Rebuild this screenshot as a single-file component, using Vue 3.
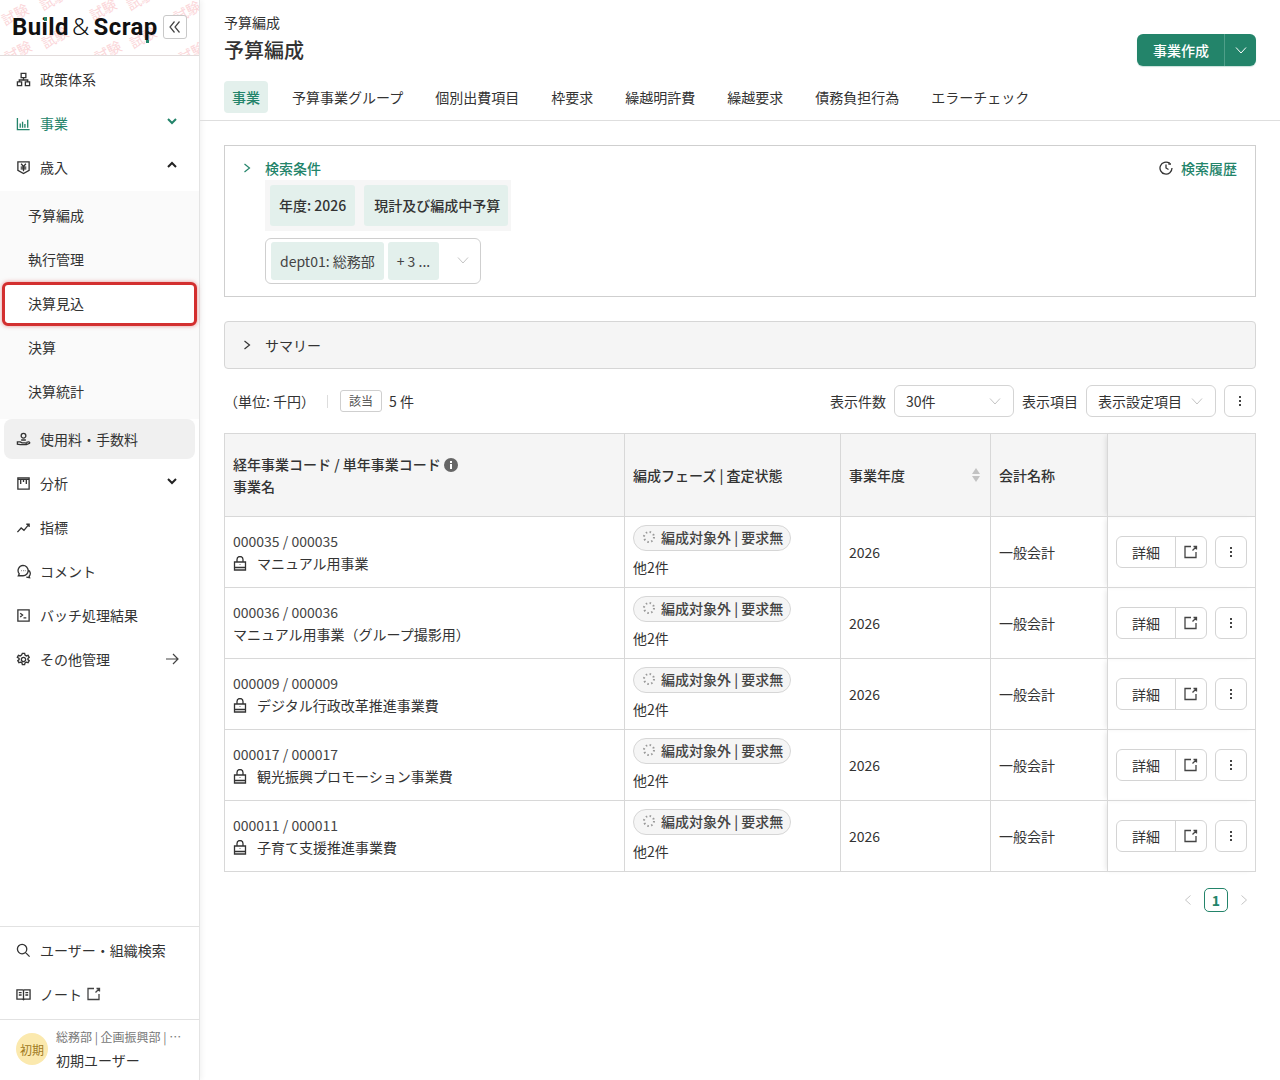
<script setup>
const topNav = [
  { label: '政策体系', icon: 'M5.500 1.500h5v4.500h-5zM8 6v2.500M3.500 10.500v-2h9v2M1.500 10.500h4.500v4h-4.500zM10 10.500h4.500v4H10z' },
  { label: '事業', green: true, chevron: 'down', icon: 'M1.500 2v12.500h13M4.500 12.500V8M7 12.500V6M9.500 12.500V8.500M12.500 12.500V4' },
  { label: '歳入', chevron: 'up', icon: 'M2 2h12v9l-6 3.500L2 11zM5.500 4l2.500 3 2.500-3M5 7.500h6M5 9.500h6M8 7v5' }
]
const subNav = ['予算編成', '執行管理', '決算見込', '決算', '決算統計']
const lowerNav = [
  { label: '使用料・手数料', active: true, icon: 'M8 1.500a2.500 2.500 0 1 1 0 5 2.500 2.500 0 0 1 0-5zM5.500 8.500h5M1.500 10.500h3l2 1h3.500a1 1 0 0 1 0 2H4.500l-3-.500zM11 11l2.500-.500a1 1 0 0 1 1 1.500L11 13.500' },
  { label: '分析', chevron: 'down', icon: 'M2 2h12v12H2zM2 3.500h12M5 3.500v5M8 3.500v3M11 3.500v5' },
  { label: '指標', icon: 'M1.500 13l4-4.500 3 2.500 5-6M11 4.500h3v3' },
  { label: 'コメント', icon: 'M7.500 1.500a5.500 5.500 0 0 1 5.500 5.500 5.500 5.500 0 0 1-5.500 5.500H2.500l1-2A5.500 5.500 0 0 1 7.500 1.500zM13 6.500a4 4 0 0 1 1 6.500l.500 1.500-3.500-.500M5.500 7h.500M7.500 7h.500M9.500 7h.500' },
  { label: 'バッチ処理結果', icon: 'M2 2h12v12H2zM4.500 5.500l2.500 2-2.500 2M8 10.500h3' },
  { label: 'その他管理', arrow: true, icon: 'M6.800 1.500h2.400l.400 1.800 1.500.900 1.800-.600 1.200 2.100-1.400 1.200v1.200l1.400 1.200-1.200 2.100-1.800-.600-1.500.900-.400 1.800H6.800l-.400-1.800-1.500-.900-1.800.600-1.200-2.100 1.400-1.200V6.900L1.400 5.700l1.200-2.100 1.800.600 1.500-.900zM8 5.700a2.300 2.300 0 1 1 0 4.600 2.300 2.300 0 0 1 0-4.600z' }
]
const tabs = ['事業', '予算事業グループ', '個別出費項目', '枠要求', '繰越明許費', '繰越要求', '債務負担行為', 'エラーチェック']
const rows = [
  { code: '000035 / 000035', name: 'マニュアル用事業', locked: true },
  { code: '000036 / 000036', name: 'マニュアル用事業（グループ撮影用）', locked: false },
  { code: '000009 / 000009', name: 'デジタル行政改革推進事業費', locked: true },
  { code: '000017 / 000017', name: '観光振興プロモーション事業費', locked: true },
  { code: '000011 / 000011', name: '子育て支援推進事業費', locked: true }
]
// 透かしの位置
const marks = [
  { left: 1, top: 5 }, { left: 39, top: -10 }, { left: 89, top: 0 }, { left: 126, top: -10 }, { left: 173, top: 2 },
  { left: 41, top: 28 }, { left: 129, top: 28 }, { left: 4, top: 42 }, { left: 94, top: 42 }, { left: 178, top: 43 }
]
</script>

<template>
  <div class="page">
    <aside class="sidebar">
      <div class="brand">
        <span v-for="(m, i) in marks" :key="i" class="mark" :style="{ left: m.left + 'px', top: m.top + 'px' }">試験</span>
        <div class="logo"><b>Bu<span class="dot-i">i</span>ld</b><span class="amp">&amp;</span><b>Scra<span class="dot-p">p</span></b></div>
        <button class="collapse">
          <svg width="14" height="14" viewBox="0 0 14 14"><path d="M6.500 1.500L2 7l4.500 5.500M11.500 1.500L7 7l4.500 5.500" /></svg>
        </button>
      </div>

      <nav class="nav">
        <div v-for="item in topNav" :key="item.label" class="nav-item" :class="{ green: item.green }">
          <svg class="nav-icon" width="15" height="15" viewBox="0 0 16 16"><path :d="item.icon" /></svg>
          <span class="nav-label">{{ item.label }}</span>
          <svg v-if="item.chevron" class="chev" width="12" height="12" viewBox="0 0 12 12"><path :d="item.chevron === 'down' ? 'M2 4l4 4 4-4' : 'M2 8l4-4 4 4'" /></svg>
        </div>
        <div class="sub-nav">
          <div v-for="s in subNav" :key="s" class="sub-item" :class="{ marked: s === '決算見込' }">{{ s }}</div>
        </div>
        <div v-for="item in lowerNav" :key="item.label" class="nav-item" :class="{ active: item.active }">
          <svg class="nav-icon" width="15" height="15" viewBox="0 0 16 16"><path :d="item.icon" /></svg>
          <span class="nav-label">{{ item.label }}</span>
          <svg v-if="item.chevron" class="chev" width="12" height="12" viewBox="0 0 12 12"><path d="M2 4l4 4 4-4" /></svg>
          <svg v-if="item.arrow" class="arrow" width="14" height="14" viewBox="0 0 14 14"><path d="M1 7h12M8 2l5 5-5 5" /></svg>
        </div>
      </nav>

      <div class="side-bottom">
        <div class="nav-item">
          <svg class="nav-icon" width="15" height="15" viewBox="0 0 16 16"><path d="M6.500 1.500a5 5 0 1 1 0 10 5 5 0 0 1 0-10zM10 10l4.500 4.500" /></svg>
          <span class="nav-label">ユーザー・組織検索</span>
        </div>
        <div class="nav-item">
          <svg class="nav-icon" width="15" height="15" viewBox="0 0 16 16"><path d="M1 3h6a1 1 0 0 1 1 1 1 1 0 0 1 1-1h6v10H9l-1 .500L7 13H1zM8 4v9.500M3 6h3M3 8.500h3M10 6h3M10 8.500h3" /></svg>
          <span class="nav-label">ノート</span>
          <svg class="ext note-ext" width="14" height="14" viewBox="0 0 14 14"><path d="M7 1.500H1v11h11V7M8.500 5.500L12.500 1.500M9.500 1.500h3v3" /></svg>
        </div>
      </div>
      <div class="user">
        <div class="avatar">初期</div>
        <div class="user-text">
          <div class="org">総務部 | 企画振興部 | ⋯</div>
          <div class="uname">初期ユーザー</div>
        </div>
      </div>
    </aside>

    <main class="main">
      <header class="header">
        <div class="head-top">
          <div class="head-text">
            <div class="crumb">予算編成</div>
            <h1 class="title">予算編成</h1>
          </div>
          <div class="split-btn">
            <span class="split-main">事業作成</span>
            <span class="split-drop">
              <svg width="12" height="12" viewBox="0 0 12 12"><path d="M1 3.500l5 5.500 5-5.500" /></svg>
            </span>
          </div>
        </div>
        <div class="tabs">
          <span v-for="(t, i) in tabs" :key="t" class="tab" :class="{ current: i === 0 }">{{ t }}</span>
        </div>
      </header>

      <div class="content">
        <section class="search">
          <div class="search-head">
            <svg class="card-chev" width="10" height="10" viewBox="0 0 10 10"><path d="M2.500 1l5 4-5 4" /></svg>
            <span class="search-title">検索条件</span>
            <span class="history">
              <svg width="14" height="14" viewBox="0 0 14 14"><path d="M10.500 2.200a6 6 0 1 0 2.500 4.800M7 3.500V7l2.500 1.500M10 1v2h2" /></svg>
              <span>検索履歴</span>
            </span>
          </div>
          <div class="search-body">
            <div class="chip-band">
              <span class="chip big">年度: 2026</span>
              <span class="chip big wide">現計及び編成中予算</span>
            </div>
            <div class="multi">
              <span class="chip">dept01: 総務部</span>
              <span class="chip">+ 3 ...</span>
              <svg class="select-chev" width="12" height="12" viewBox="0 0 12 12"><path d="M1 3.500l5 5.500 5-5.500" /></svg>
            </div>
          </div>
        </section>

        <section class="summary">
          <svg class="summary-chev" width="10" height="10" viewBox="0 0 10 10"><path d="M2.500 1l5 4-5 4" /></svg>
          <span>サマリー</span>
        </section>

        <div class="toolbar">
          <span class="unit">（単位: 千円）</span>
          <span class="sep"></span>
          <span class="badge">該当</span>
          <span class="count">5 件</span>
          <span class="spacer"></span>
          <span>表示件数</span>
          <span class="select w120">30件<svg width="12" height="12" viewBox="0 0 12 12"><path d="M1 3.500l5 5.500 5-5.500" /></svg></span>
          <span>表示項目</span>
          <span class="select w130">表示設定項目<svg width="12" height="12" viewBox="0 0 12 12"><path d="M1 3.500l5 5.500 5-5.500" /></svg></span>
          <button class="kebab"><i></i><i></i><i></i></button>
        </div>

        <table class="grid">
          <colgroup>
            <col style="width: 400px" /><col style="width: 216px" /><col style="width: 150px" /><col style="width: 117px" /><col />
          </colgroup>
          <thead>
            <tr>
              <th class="code-head">
                <div>経年事業コード / 単年事業コード
                  <svg class="info" width="14" height="14" viewBox="0 0 14 14"><circle cx="7" cy="7" r="7" /><rect x="6" y="6" width="2" height="5" /><rect x="6" y="3" width="2" height="2" /></svg>
                </div>
                <div class="second">事業名</div>
              </th>
              <th>編成フェーズ | 査定状態</th>
              <th>
                <div class="sortable">事業年度
                  <svg width="10" height="14" viewBox="0 0 10 14"><path d="M5 0l4 6H1zM5 14L1 8h8z" /></svg>
                </div>
              </th>
              <th>会計名称</th>
              <th class="fixed"></th>
            </tr>
          </thead>
          <tbody>
            <tr v-for="r in rows" :key="r.code">
              <td>
                <div class="code">{{ r.code }}</div>
                <div class="name">
                  <svg v-if="r.locked" class="lock" width="14" height="15" viewBox="0 0 14 15"><path d="M4 6V3.500a3 3 0 0 1 6 0V6M1.500 6h11v8h-11zM1.500 11.500h11M7 8.500v.500" /></svg>
                  <span>{{ r.name }}</span>
                </div>
              </td>
              <td class="phase">
                <span class="status">
                  <svg width="14" height="14" viewBox="0 0 14 14"><circle cx="7" cy="7" r="5" /></svg>
                  編成対象外 | 要求無
                </span>
                <div class="more">他2件</div>
              </td>
              <td>2026</td>
              <td>一般会計</td>
              <td class="fixed">
                <div class="actions">
                  <span class="detail">
                    <span class="detail-main">詳細</span>
                    <span class="detail-ext">
                      <svg class="ext" width="14" height="14" viewBox="0 0 14 14"><path d="M7 1.500H1v11h11V7M8.500 5.500L12.500 1.500M9.500 1.500h3v3" /></svg>
                    </span>
                  </span>
                  <button class="kebab"><i></i><i></i><i></i></button>
                </div>
              </td>
            </tr>
          </tbody>
        </table>

        <div class="pager">
          <svg width="10" height="12" viewBox="0 0 10 12"><path d="M7.500 1.500L2.500 6l5 4.500" /></svg>
          <span class="page-no">1</span>
          <svg width="10" height="12" viewBox="0 0 10 12"><path d="M2.500 1.500L7.500 6l-5 4.500" /></svg>
        </div>
      </div>
    </main>
  </div>
</template>

<style>
html, body {
  margin: 0;
  background: #fff;
}
</style>

<style scoped>
.page {
  display: flex;
  width: 1280px;
  min-height: 1080px;
  font-family: "Noto Sans CJK JP", "Noto Sans", sans-serif;
  font-size: 14px;
  color: #333;
}

/* sidebar */
.sidebar {
  width: 199px;
  height: 1080px;
  flex: none;
  display: flex;
  flex-direction: column;
  border-right: 1px solid #e4e4e4;
  box-shadow: 2px 0 5px rgba(0, 0, 0, 0.05);
  background: #fff;
  box-sizing: content-box;
}
.brand {
  position: relative;
  height: 56px;
  flex: none;
  display: flex;
  align-items: center;
  justify-content: space-between;
  padding: 0 12px 2px;
  box-sizing: border-box;
  border-bottom: 1px solid #e2dcdc;
  overflow: hidden;
}
.mark {
  position: absolute;
  font-size: 14px;
  line-height: 19px;
  color: #fbd6d9;
  transform: rotate(-28deg);
  white-space: nowrap;
}
.logo {
  position: relative;
  font-family: Roboto, "Noto Sans", sans-serif;
  font-size: 24px;
  line-height: 32px;
  color: #111;
  letter-spacing: 0.4px;
  white-space: nowrap;
}
.logo b { font-weight: 700; }
.dot-i, .dot-p { position: relative; }
.dot-i::before {
  content: "";
  position: absolute;
  left: 2px;
  top: 4px;
  width: 3px;
  height: 4px;
  background: #23846a;
}
.dot-p::after {
  content: "";
  position: absolute;
  left: 2px;
  bottom: -2px;
  width: 3px;
  height: 3px;
  background: #23846a;
}
.amp {
  font-weight: 300;
  font-family: "Noto Sans", sans-serif;
  margin: 0 4px 0 3px;
}
.collapse {
  position: relative;
  width: 24px;
  height: 24px;
  flex: none;
  padding: 0;
  display: flex;
  align-items: center;
  justify-content: center;
  background: #fff;
  border: 1px solid #c9c9c9;
  border-radius: 3px;
}
.collapse path { fill: none; stroke: #444; stroke-width: 1.200; }
.nav { padding-top: 1px; flex: 1; }
.nav-item {
  position: relative;
  height: 44px;
  display: flex;
  align-items: center;
  padding: 0 16px;
  box-sizing: border-box;
}
.nav-icon { flex: none; margin-right: 9px; }
.nav-icon path { fill: none; stroke: #333; stroke-width: 1.400; }
.nav-label { white-space: nowrap; line-height: 20px; }
.nav-item.green { color: #23846a; }
.nav-item.green .nav-icon path, .nav-item.green .chev path { stroke: #23846a; }
.nav-item.active {
  height: 40px;
  margin: 0 4px 2px;
  padding: 0 12px;
  background: #f0f0f0;
  border-radius: 8px;
  width: 191px;
}
.chev { position: absolute; right: 21px; top: 14px; }
.chev path { fill: none; stroke: #222; stroke-width: 2; }
.arrow { position: absolute; right: 20px; top: 15px; }
.arrow path { fill: none; stroke: #444; stroke-width: 1.200; }
.sub-nav {
  background: #fafafa;
  padding: 2px 0;
  height: 228px;
  box-sizing: border-box;
  margin-top: 2px;
}
.sub-item {
  height: 44px;
  display: flex;
  align-items: center;
  padding-left: 28px;
  line-height: 20px;
}
.sub-item.marked {
  margin: 1px 2px -1px;
  padding-left: 23px;
  padding-bottom: 2px;
  background: #fff;
  border: 3px solid #d32f2f;
  border-radius: 6px;
  box-sizing: border-box;
  box-shadow: 0 0 4px rgba(211, 47, 47, 0.5);
}
.side-bottom {
  flex: none;
  height: 94px;
  padding-top: 1px;
  box-sizing: border-box;
  border-top: 1px solid #e2e2e2;
  border-bottom: 1px solid #e2e2e2;
}
.ext { flex: none; }
.ext path { fill: none; stroke: #444; stroke-width: 1.300; }
.note-ext { margin-left: 5px; }
.user {
  flex: none;
  height: 60px;
  display: flex;
  align-items: center;
  padding: 0 16px 2px;
  box-sizing: border-box;
  gap: 8px;
}
.avatar {
  width: 32px;
  height: 32px;
  flex: none;
  border-radius: 50%;
  background: #fbe9ae;
  color: #a07a22;
  font-size: 12px;
  display: flex;
  align-items: center;
  justify-content: center;
}
.org { font-size: 12px; line-height: 18px; color: #777; white-space: nowrap; }
.uname { font-size: 14px; line-height: 22px; margin-top: 3px; color: #333; }

/* header */
.main { flex: 1; min-width: 0; }
.header {
  height: 121px;
  box-sizing: border-box;
  border-bottom: 1px solid #dedede;
  padding: 12px 24px 0;
}
.head-top {
  display: flex;
  justify-content: space-between;
  align-items: flex-end;
  height: 54px;
}
.head-text { padding-bottom: 1px; }
.crumb { font-size: 14px; line-height: 20px; }
.title { margin: 3px 0 0; font-size: 20px; line-height: 30px; font-weight: 500; color: #333; }
.split-btn {
  display: flex;
  height: 32px;
  border-radius: 6px;
  background: #23846a;
  color: #fff;
  font-weight: 500;
  box-shadow: 0 1px 1px rgba(35, 132, 106, 0.25);
}
.split-main {
  width: 86px;
  padding-left: 1px;
  display: flex;
  align-items: center;
  justify-content: center;
  border-right: 1px solid #4f9f89;
}
.split-drop {
  width: 31px;
  display: flex;
  align-items: center;
  justify-content: center;
}
.split-drop path { fill: none; stroke: #fff; stroke-width: 1; }
.tabs {
  display: flex;
  gap: 16px;
  margin-top: 15px;
}
.tab {
  height: 32px;
  line-height: 32px;
  padding: 0 8px;
  border-radius: 4px;
  white-space: nowrap;
}
.tab.current {
  background: #e3f0ec;
  color: #23846a;
  font-weight: 500;
}

/* content */
.content { padding: 24px 24px 0; }
.search {
  position: relative;
  height: 152px;
  box-sizing: border-box;
  border: 1px solid #cfcfcf;
  padding: 12px 18px 0 17px;
}
.search-head { display: flex; align-items: center; height: 20px; }
.card-chev { margin-right: 13px; }
.card-chev path { fill: none; stroke: #23846a; stroke-width: 1.200; }
.search-title { color: #23846a; font-weight: 500; }
.history {
  margin-left: auto;
  display: flex;
  align-items: center;
  gap: 8px;
  color: #23846a;
  font-weight: 500;
}
.history path { fill: none; stroke: #333; stroke-width: 1.300; }
.search-body { padding-left: 23px; padding-top: 2px; }
.chip-band {
  display: inline-flex;
  gap: 9px;
  padding: 5px 3px 5px 5px;
  background: #f6f6f6;
}
.chip {
  display: inline-flex;
  align-items: center;
  height: 38px;
  padding: 0 9px;
  background: #e3f0ec;
  border-radius: 3px;
  white-space: nowrap;
  color: #444;
}
.chip.big { height: 41px; padding: 0 9px 1px; box-sizing: border-box; font-weight: 500; color: #333; }
.chip.big.wide { padding: 0 8px 1px 10px; }
.multi {
  position: relative;
  width: 216px;
  height: 46px;
  margin-top: 7px;
  box-sizing: border-box;
  border: 1px solid #cfcfcf;
  border-radius: 6px;
  padding: 3px 5px;
  display: flex;
  gap: 4px;
}
.select-chev { position: absolute; right: 11px; top: 15px; }
.select-chev path { fill: none; stroke: #c4c4c4; stroke-width: 1; }
.summary {
  height: 48px;
  margin-top: 24px;
  box-sizing: border-box;
  border: 1px solid #d6d6d6;
  border-radius: 4px;
  background: #f5f5f5;
  display: flex;
  align-items: center;
  padding-left: 17px;
  gap: 13px;
}
.summary-chev path { fill: none; stroke: #333; stroke-width: 1.200; }
.toolbar {
  display: flex;
  align-items: center;
  height: 32px;
  margin-top: 16px;
  gap: 8px;
  white-space: nowrap;
}
.unit { width: 94px; }
.sep { width: 1px; height: 13px; background: #ddd; margin-left: 1px; }
.badge {
  margin-left: 4px;
  box-sizing: border-box;
  width: 42px;
  height: 22px;
  border: 1.500px solid #cfcfcf;
  border-radius: 3px;
  font-size: 12px;
  line-height: 19px;
  text-align: center;
  color: #555;
}
.count { margin-left: -1px; }
.spacer { flex: 1; }
.select {
  display: flex;
  align-items: center;
  justify-content: space-between;
  height: 32px;
  box-sizing: border-box;
  border: 1px solid #d4d4d4;
  border-radius: 6px;
  padding: 0 12px 0 11px;
}
.select path { fill: none; stroke: #c4c4c4; stroke-width: 1; }
.w120 { width: 120px; }
.w130 { width: 130px; }
.kebab {
  width: 32px;
  height: 32px;
  padding: 0;
  display: flex;
  flex-direction: column;
  align-items: center;
  justify-content: center;
  gap: 2px;
  background: #fff;
  border: 1px solid #d4d4d4;
  border-radius: 6px;
  box-sizing: border-box;
}
.kebab i { width: 2px; height: 2px; background: #444; display: block; }

/* table */
.grid {
  width: 1032px;
  margin-top: 16px;
  border-collapse: collapse;
  table-layout: fixed;
}
.grid th, .grid td {
  border: 1px solid #d8d8d8;
  padding: 0 8px;
  text-align: left;
  vertical-align: middle;
}
.grid th {
  height: 83px;
  box-sizing: border-box;
  background: #f5f5f5;
  font-weight: 500;
  line-height: 22px;
}
.grid th.code-head { padding-bottom: 1px; }
.grid td { height: 71px; box-sizing: border-box; line-height: 23px; }
.info { vertical-align: -2px; }
.info circle { fill: #666; }
.info rect { fill: #fff; }
.sortable { position: relative; }
.sortable svg { position: absolute; right: 1px; top: 4px; }
.sortable path { fill: #c2c2c2; }
.code { color: #444; margin-top: 1px; }
.name { display: flex; align-items: center; gap: 10px; white-space: nowrap; line-height: 22px; margin: -1px 0 1px; }
.lock { flex: none; }
.lock path { fill: none; stroke: #333; stroke-width: 1.300; }
.grid td.phase { padding-bottom: 2px; }
.status {
  display: inline-flex;
  align-items: center;
  height: 26px;
  box-sizing: border-box;
  gap: 5px;
  padding: 0 7px 1px 8px;
  border: 1px solid #d6d6d6;
  border-radius: 13px;
  background: #f5f5f5;
  white-space: nowrap;
  font-weight: 500;
  color: #444;
  line-height: 24px;
}
.status circle { fill: none; stroke: #999; stroke-width: 2; stroke-dasharray: 1.500 2.430; }
.more { margin-top: 5px; line-height: 22px; }
.grid .fixed {
  box-shadow: -4px 0 5px -2px rgba(0, 0, 0, 0.1);
  border-left: 1px solid #e5e5e5;
}
.actions { display: flex; gap: 8px; }
.detail {
  display: flex;
  width: 91px;
  height: 32px;
  box-sizing: border-box;
  border: 1px solid #d4d4d4;
  border-radius: 6px;
}
.detail-main {
  width: 58px;
  text-align: center;
  line-height: 30px;
  border-right: 1px solid #d4d4d4;
}
.detail-ext {
  flex: 1;
  display: flex;
  align-items: center;
  justify-content: center;
}
.pager {
  display: flex;
  justify-content: flex-end;
  align-items: center;
  gap: 11px;
  margin-top: 16px;
  padding-right: 7px;
}
.pager path { fill: none; stroke: #c6c6c6; stroke-width: 1; }
.page-no {
  width: 24px;
  height: 24px;
  box-sizing: border-box;
  border: 1px solid #23846a;
  border-radius: 5px;
  color: #23846a;
  font-weight: 700;
  text-align: center;
  line-height: 22px;
}
</style>
